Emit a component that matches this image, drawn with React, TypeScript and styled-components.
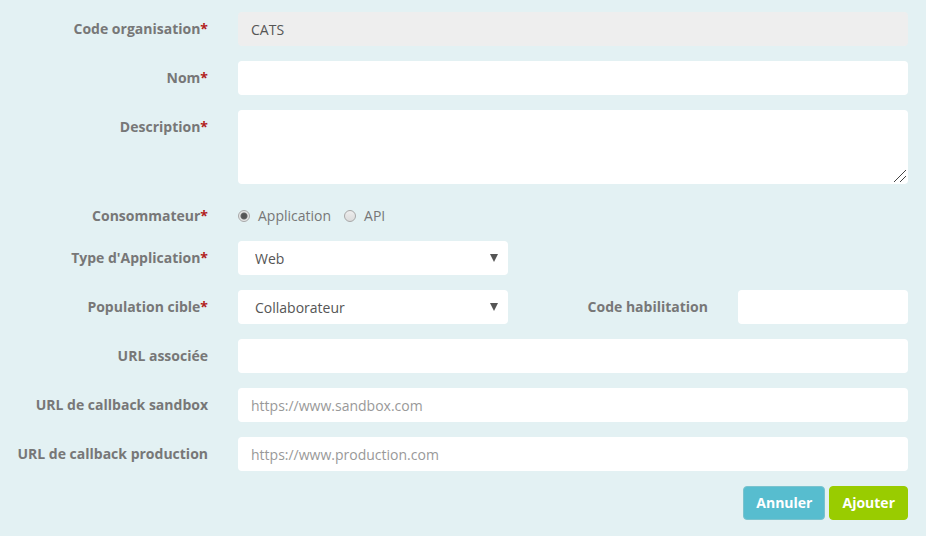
import React, { useState } from "react";
import styled, { createGlobalStyle, css } from "styled-components";

const GlobalStyle = createGlobalStyle`
  *, *::before, *::after { box-sizing: border-box; }
  html { min-height: 100%; background: #e3f1f3; }
  body {
    margin: 0;
    background: #e3f1f3;
    color: #777;
    font-family: "Open Sans", "Noto Sans", sans-serif;
    font-size: 14px;
    line-height: 20px;
  }
`;

const Form = styled.form`
  display: flex;
  flex-direction: column;
  gap: 15px;
  padding: 12px 18px 16px 0;
`;

const Row = styled.div`
  display: grid;
  grid-template-columns: 208px minmax(0, 1fr);
  column-gap: 30px;
  align-items: start;
`;

const labelText = css`
  padding-top: 7px;
  font-weight: 700;
  line-height: 20px;
  text-align: right;
`;

const Label = styled.label`
  ${labelText}
`;

const GroupLabel = styled.span`
  ${labelText}
`;

const Star = styled.span`
  color: #b22222;
`;

const control = css`
  display: block;
  width: 100%;
  margin: 0;
  border: 1px solid transparent;
  border-radius: 4px;
  background: #fff;
  color: #555;
  font: inherit;
  outline-color: #57bdcf;
`;

const Input = styled.input`
  ${control}
  height: 34px;
  padding: 6px 12px;
  &::placeholder { color: #999; opacity: 1; }
  &:read-only { background: #eee; }
`;

const gripLines = encodeURIComponent(
  '<svg xmlns="http://www.w3.org/2000/svg" width="15" height="15"><path d="M2 14L14 2M8 14L14 8" stroke="#444"/></svg>'
);

const TextArea = styled.textarea`
  ${control}
  height: 74px;
  padding: 6px 12px;
  resize: vertical;

  &::-webkit-resizer {
    background: url("data:image/svg+xml,${gripLines}") no-repeat right bottom;
  }
`;

const SelectBox = styled.div`
  position: relative;
`;

const Select = styled.select`
  ${control}
  height: 34px;
  padding: 7px 32px 5px 16px;
  appearance: none;
`;

const Arrow = styled.svg`
  position: absolute;
  top: 13px;
  right: 10px;
  width: 8px;
  height: 8px;
  fill: #555;
  pointer-events: none;
`;

const FieldLine = styled.div`
  display: grid;
  grid-template-columns: minmax(0, 27fr) minmax(0, 20fr) minmax(0, 17fr);
  column-gap: 15px;
  align-items: start;
`;

const SideLabel = styled(Label)`
  padding-right: 15px;
`;

const Radios = styled.div`
  display: flex;
  gap: 13px;
  padding-top: 7px;
`;

const Choice = styled.label`
  display: flex;
  align-items: center;
  gap: 8px;
`;

const Radio = styled.input`
  appearance: none;
  width: 12px;
  height: 12px;
  margin: 0;
  border: 1px solid #a8a8a8;
  border-radius: 50%;
  background: linear-gradient(#ededed, #dcdcdc);

  &:checked {
    background: radial-gradient(circle, #555 0 2px, #666 3px, #e6e6e6 4px);
  }
`;

const Actions = styled.div`
  display: flex;
  justify-content: flex-end;
  gap: 4px;
`;

const Button = styled.button<{ $tone: "cancel" | "submit" }>`
  height: 34px;
  padding: 6px 12px;
  border: 1px solid ${({ $tone }) => ($tone === "cancel" ? "#7ac3ce" : "#99cc00")};
  border-radius: 4px;
  background: ${({ $tone }) => ($tone === "cancel" ? "#57bdcf" : "#99cc00")};
  color: #fff;
  font: inherit;
  font-weight: 700;
  cursor: pointer;
`;

function Required() {
  return <Star aria-hidden="true">*</Star>;
}

interface TextRowProps {
  id: string;
  label: string;
  required?: boolean;
  readOnly?: boolean;
  value?: string;
  placeholder?: string;
}

function TextRow({ id, label, required, readOnly, value, placeholder }: TextRowProps) {
  return (
    <Row>
      <Label htmlFor={id}>{label}{required && <Required />}</Label>
      <Input id={id} type="text" required={required} readOnly={readOnly} defaultValue={value} placeholder={placeholder} />
    </Row>
  );
}

function Dropdown({ id, options }: { id: string; options: string[] }) {
  return (
    <SelectBox>
      <Select id={id} required>
        {options.map((option) => <option key={option}>{option}</option>)}
      </Select>
      <Arrow viewBox="0 0 8 8" aria-hidden="true"><path d="M0 0h8L4 8z" /></Arrow>
    </SelectBox>
  );
}

export default function App() {
  const [consumer, setConsumer] = useState("Application");

  return (
    <>
      <GlobalStyle />
      <Form onSubmit={(event) => event.preventDefault()}>
        <TextRow id="organisation" label="Code organisation" required readOnly value="CATS" />
        <TextRow id="nom" label="Nom" required />
        <Row>
          <Label htmlFor="description">Description<Required /></Label>
          <TextArea id="description" required />
        </Row>
        <Row role="radiogroup" aria-labelledby="consommateur">
          <GroupLabel id="consommateur">Consommateur<Required /></GroupLabel>
          <Radios>
            {["Application", "API"].map((name) => (
              <Choice key={name}>
                <Radio type="radio" name="consommateur" value={name} checked={consumer === name} onChange={() => setConsumer(name)} />
                {name}
              </Choice>
            ))}
          </Radios>
        </Row>
        <Row>
          <Label htmlFor="type">Type d'Application<Required /></Label>
          <FieldLine>
            <Dropdown id="type" options={["Web"]} />
          </FieldLine>
        </Row>
        <Row>
          <Label htmlFor="population">Population cible<Required /></Label>
          <FieldLine>
            <Dropdown id="population" options={["Collaborateur"]} />
            <SideLabel htmlFor="habilitation">Code habilitation</SideLabel>
            <Input id="habilitation" type="text" />
          </FieldLine>
        </Row>
        <TextRow id="url" label="URL associée" />
        <TextRow id="sandbox" label="URL de callback sandbox" placeholder="https://www.sandbox.com" />
        <TextRow id="production" label="URL de callback production" placeholder="https://www.production.com" />
        <Actions>
          <Button type="button" $tone="cancel">Annuler</Button>
          <Button type="submit" $tone="submit">Ajouter</Button>
        </Actions>
      </Form>
    </>
  );
}
